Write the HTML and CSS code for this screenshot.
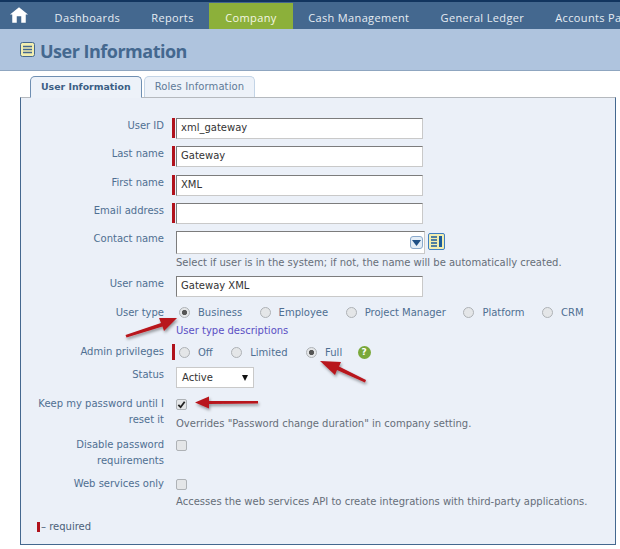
FILE: index.html
```html
<!DOCTYPE html>
<html lang="en">
<head>
  <meta charset="UTF-8" />
  <title>User Information</title>
  <link rel="stylesheet" href="styles.css">
</head>
<body>
  <nav class="topnav">
    <a class="home" href="#">
      <svg width="18" height="16" viewBox="0 0 20 17"><path d="M10 0 L20 8 L17.500 8 L17.500 17 L12.500 17 L12.500 10 L7.500 10 L7.500 17 L2.500 17 L2.500 8 L0 8 Z" fill="#fff"/></svg>
    </a>
    <a class="navitem" href="#">Dashboards</a>
    <a class="navitem" href="#">Reports</a>
    <a class="navitem active" href="#">Company</a>
    <a class="navitem" href="#">Cash Management</a>
    <a class="navitem" href="#">General Ledger</a>
    <a class="navitem" href="#">Accounts Payable</a>
  </nav>

  <header class="pagehead">
    <svg width="15" height="15" viewBox="0 0 15 15"><rect x="0.5" y="0.5" width="14" height="14" rx="2" fill="#f2eeb0" stroke="#44688f"/><path d="M3 4.500H12M3 7.500H12M3 10.500H12" stroke="#44688f" stroke-width="1.4"/></svg>
    <h1>User Information</h1>
  </header>

  <main class="content">
    <div class="tabs">
      <a class="tab current" href="#">User Information</a>
      <a class="tab" href="#">Roles Information</a>
    </div>

    <form class="panel">
      <div class="row">
        <label>User ID</label>
        <div class="field req"><div class="text">xml_gateway</div></div>
      </div>
      <div class="row">
        <label>Last name</label>
        <div class="field req"><div class="text">Gateway</div></div>
      </div>
      <div class="row">
        <label>First name</label>
        <div class="field req"><div class="text">XML</div></div>
      </div>
      <div class="row">
        <label>Email address</label>
        <div class="field req"><div class="text"></div></div>
      </div>
      <div class="row">
        <label>Contact name</label>
        <div class="field">
          <div class="combo">
            <div class="combobox">
              <span class="dropbtn"><svg width="9" height="6" viewBox="0 0 9 6"><path d="M0 0H9L4.500 6Z" fill="#1d4f86"/></svg></span>
            </div>
            <svg class="lookup" width="17" height="17" viewBox="0 0 17 17"><rect x="0.5" y="0.5" width="16" height="16" rx="1.500" fill="#f2eeb0" stroke="#3f7fc0"/><path d="M3 4H9M3 7H9M3 10H9M3 13H9" stroke="#1d5c9a" stroke-width="1.6"/><rect x="11" y="3" width="3" height="11" fill="#1d5c9a"/></svg>
          </div>
          <p class="help contact-help">Select if user is in the system; if not, the name will be automatically created.</p>
        </div>
      </div>
      <div class="row">
        <label>User name</label>
        <div class="field"><div class="text">Gateway XML</div></div>
      </div>
      <div class="row">
        <label>User type</label>
        <div class="field">
          <div class="radios">
            <span class="radio on">Business</span>
            <span class="radio">Employee</span>
            <span class="radio">Project Manager</span>
            <span class="radio">Platform</span>
            <span class="radio">CRM</span>
          </div>
          <a class="desc" href="#">User type descriptions</a>
        </div>
      </div>
      <div class="row">
        <label>Admin privileges</label>
        <div class="field req short">
          <div class="radios wide">
            <span class="radio">Off</span>
            <span class="radio">Limited</span>
            <span class="radio on">Full</span>
            <span class="qmark">?</span>
          </div>
        </div>
      </div>
      <div class="row">
        <label>Status</label>
        <div class="field">
          <div class="select">Active<svg width="6" height="6" viewBox="0 0 6 6"><path d="M0 0H6L3 6Z" fill="#111"/></svg></div>
        </div>
      </div>
      <div class="row">
        <label>Keep my password until I reset it</label>
        <div class="field">
          <span class="check"><svg width="10" height="9" viewBox="0 0 10 9"><path d="M1.500 5L4 7.500L8.500 1.500" fill="none" stroke="#222" stroke-width="2"/></svg></span>
          <p class="help keep-help">Overrides "Password change duration" in company setting.</p>
        </div>
      </div>
      <div class="row">
        <label>Disable password requirements</label>
        <div class="field"><span class="check"></span></div>
      </div>
      <div class="row">
        <label>Web services only</label>
        <div class="field">
          <span class="check"></span>
          <p class="help web-help">Accesses the web services API to create integrations with third-party applications.</p>
        </div>
      </div>
      <p class="legend"><span class="legendbar"></span>– required</p>
    </form>
  </main>

  <svg class="arrows" width="620" height="549" viewBox="0 0 620 549">
    <defs>
      <filter id="shadow" x="-20%" y="-50%" width="140%" height="200%"><feDropShadow dx="1" dy="2" stdDeviation="1.5" flood-color="#000" flood-opacity="0.4"/></filter>
    </defs>
    <g filter="url(#shadow)" fill="#b8141c">
      <path d="M125.500 335 L161 323 L159 318 L177 318 L164 331 L162.500 326.500 L126.500 337.500 Z"/>
      <path d="M365 382.500 L337 370 L335 375 L320 361 L341 362 L339 366.500 L366 380 Z"/>
      <path d="M258 401 L209 401 L209 396.500 L195 402.500 L209 408.500 L209 404 L258 403.500 Z"/>
    </g>
  </svg>
</body>
</html>
```

FILE: styles.css
```css
body {
  margin: 0;
  width: 620px;
  height: 549px;
  overflow: hidden;
  position: relative;
  background-color: #fff;
  font-family: "DejaVu Sans", sans-serif;
  font-size: 10px;
  color: #4f6f92;
}
a {
  text-decoration: none;
}

/* top navigation */
.topnav {
  display: flex;
  height: 27px;
  border-top: 2px solid #12355f;
  background-color: #44688f;
  box-shadow: 0 1px 2px #33506f;
  overflow: hidden;
  white-space: nowrap;
  font-family: "Open Sans", sans-serif;
  font-size: 11px;
  letter-spacing: 0.35px;
}
.home {
  padding: 5px 0 0 10px;
  width: 29px;
  flex: none;
}
.navitem {
  color: #e6ecf3;
  line-height: 31px;
  padding: 0 15.6px;
  flex: none;
}
.navitem.active {
  padding: 0 16px;
  background-color: #8cb03a;
  color: #f4f7e4;
  margin-top: 1px;
  line-height: 29px;
}

/* page heading */
.pagehead {
  display: flex;
  align-items: center;
  gap: 5px;
  height: 41px;
  padding-left: 20px;
  background-color: #afc4de;
  border-bottom: 1px solid #8fa6c0;
}
.pagehead h1 {
  margin: 0;
  padding-top: 2px;
  font-family: "Open Sans", sans-serif;
  font-size: 18px;
  font-weight: 700;
  letter-spacing: -0.5px;
  color: #44688f;
}

/* tabs */
.content {
  padding: 5px 4px 0 20px;
}
.tabs {
  display: flex;
  gap: 2px;
  padding-left: 10px;
  margin-bottom: -1px;
  position: relative;
}
.tab {
  height: 20px;
  line-height: 20px;
  padding: 0 10px;
  border: 1px solid #c3d4e6;
  border-bottom: none;
  border-radius: 5px 5px 0 0;
  background-color: #edf2f9;
  color: #5f7a98;
  letter-spacing: 0.1px;
}
.tab.current {
  border-color: #6f8fb2;
  border-bottom: 1px solid #edf2f9;
  font-size: 9.4px;
  font-weight: bold;
  letter-spacing: 0;
  color: #3c5f85;
}

/* form panel */
.panel {
  box-sizing: border-box;
  height: 448px;
  padding: 20px 0 0;
  border: 1px solid #44688f;
  border-top: 1px solid #b5b9be;
  background-color: #ebf0f8;
}
.row {
  display: grid;
  grid-template-columns: 143px 1fr;
  column-gap: 12px;
  margin-bottom: 7.3px;
}
.row label {
  text-align: right;
  line-height: 16px;
}
.field {
  position: relative;
}
.field.req::before {
  content: "";
  position: absolute;
  left: -4px;
  top: 0;
  width: 3px;
  height: 20px;
  background-color: #b0121c;
}
.field.short::before {
  height: 16px;
}
.text {
  box-sizing: border-box;
  width: 247px;
  height: 21px;
  padding: 0 4px;
  border: 1px solid #c9c9c9;
  border-top-color: #7c7c7c;
  border-left-color: #7c7c7c;
  background-color: #fff;
  line-height: 17px;
  color: #333;
}
.help {
  margin: 0;
  line-height: 13px;
  color: #666e78;
}
.contact-help {
  margin-top: 2px;
}
.keep-help {
  margin-top: 7px;
}
.web-help {
  margin-top: 5px;
}

/* contact name */
.combo {
  display: flex;
  gap: 3px;
  align-items: center;
}
.combobox {
  box-sizing: border-box;
  width: 249px;
  height: 23px;
  border: 1px solid #c9c9c9;
  border-top-color: #7c7c7c;
  border-left-color: #7c7c7c;
  background-color: #fff;
  display: flex;
  justify-content: flex-end;
  align-items: center;
}
.dropbtn {
  box-sizing: border-box;
  width: 13px;
  height: 13px;
  margin-right: 1px;
  border: 1px solid #8aa9cc;
  border-radius: 3px;
  background-color: #e3edf7;
  display: flex;
  align-items: center;
  justify-content: center;
}
.lookup {
  margin-top: -3px;
}

/* radios */
.radios {
  display: flex;
  align-items: center;
  gap: 17.5px;
  height: 16px;
  padding-left: 3px;
}
.radios.wide {
  gap: 18.5px;
}
.radio {
  display: flex;
  align-items: center;
  gap: 8px;
}
.radio::before {
  content: "";
  box-sizing: border-box;
  width: 11px;
  height: 11px;
  border: 1px solid #aeb2b6;
  border-radius: 50%;
  background-color: #e4e6e8;
  flex: none;
}
.radio.on::before {
  background: radial-gradient(circle, #555 0 2.2px, #e4e6e8 3px);
}
.desc {
  display: block;
  margin-top: 3px;
  color: #5a4fc4;
  line-height: 13px;
}
.qmark {
  width: 13px;
  height: 13px;
  border-radius: 50%;
  margin-left: -3px;
  background-color: #7aa83a;
  color: #fff;
  font-weight: bold;
  font-size: 9px;
  line-height: 13px;
  text-align: center;
}
.select {
  box-sizing: border-box;
  width: 78px;
  height: 21px;
  padding: 0 5px;
  display: flex;
  align-items: center;
  justify-content: space-between;
  border: 1px solid #c9c9c9;
  background-color: #fff;
  color: #333;
}

/* checkboxes */
.check {
  box-sizing: border-box;
  display: flex;
  align-items: center;
  justify-content: center;
  width: 11px;
  height: 11px;
  margin-top: 3px;
  border: 1px solid #aeb2b6;
  border-radius: 2px;
  background-color: #e4e6e8;
}
.legend {
  margin: 12px 0 0 16px;
  display: flex;
  align-items: center;
  line-height: 13px;
  color: #4a5f7a;
}
.legendbar {
  width: 3px;
  height: 10px;
  margin-right: 1px;
  background-color: #b0121c;
}

/* red annotation arrows drawn over the screenshot */
.arrows {
  position: absolute;
  left: 0;
  top: 0;
  pointer-events: none;
}
```
